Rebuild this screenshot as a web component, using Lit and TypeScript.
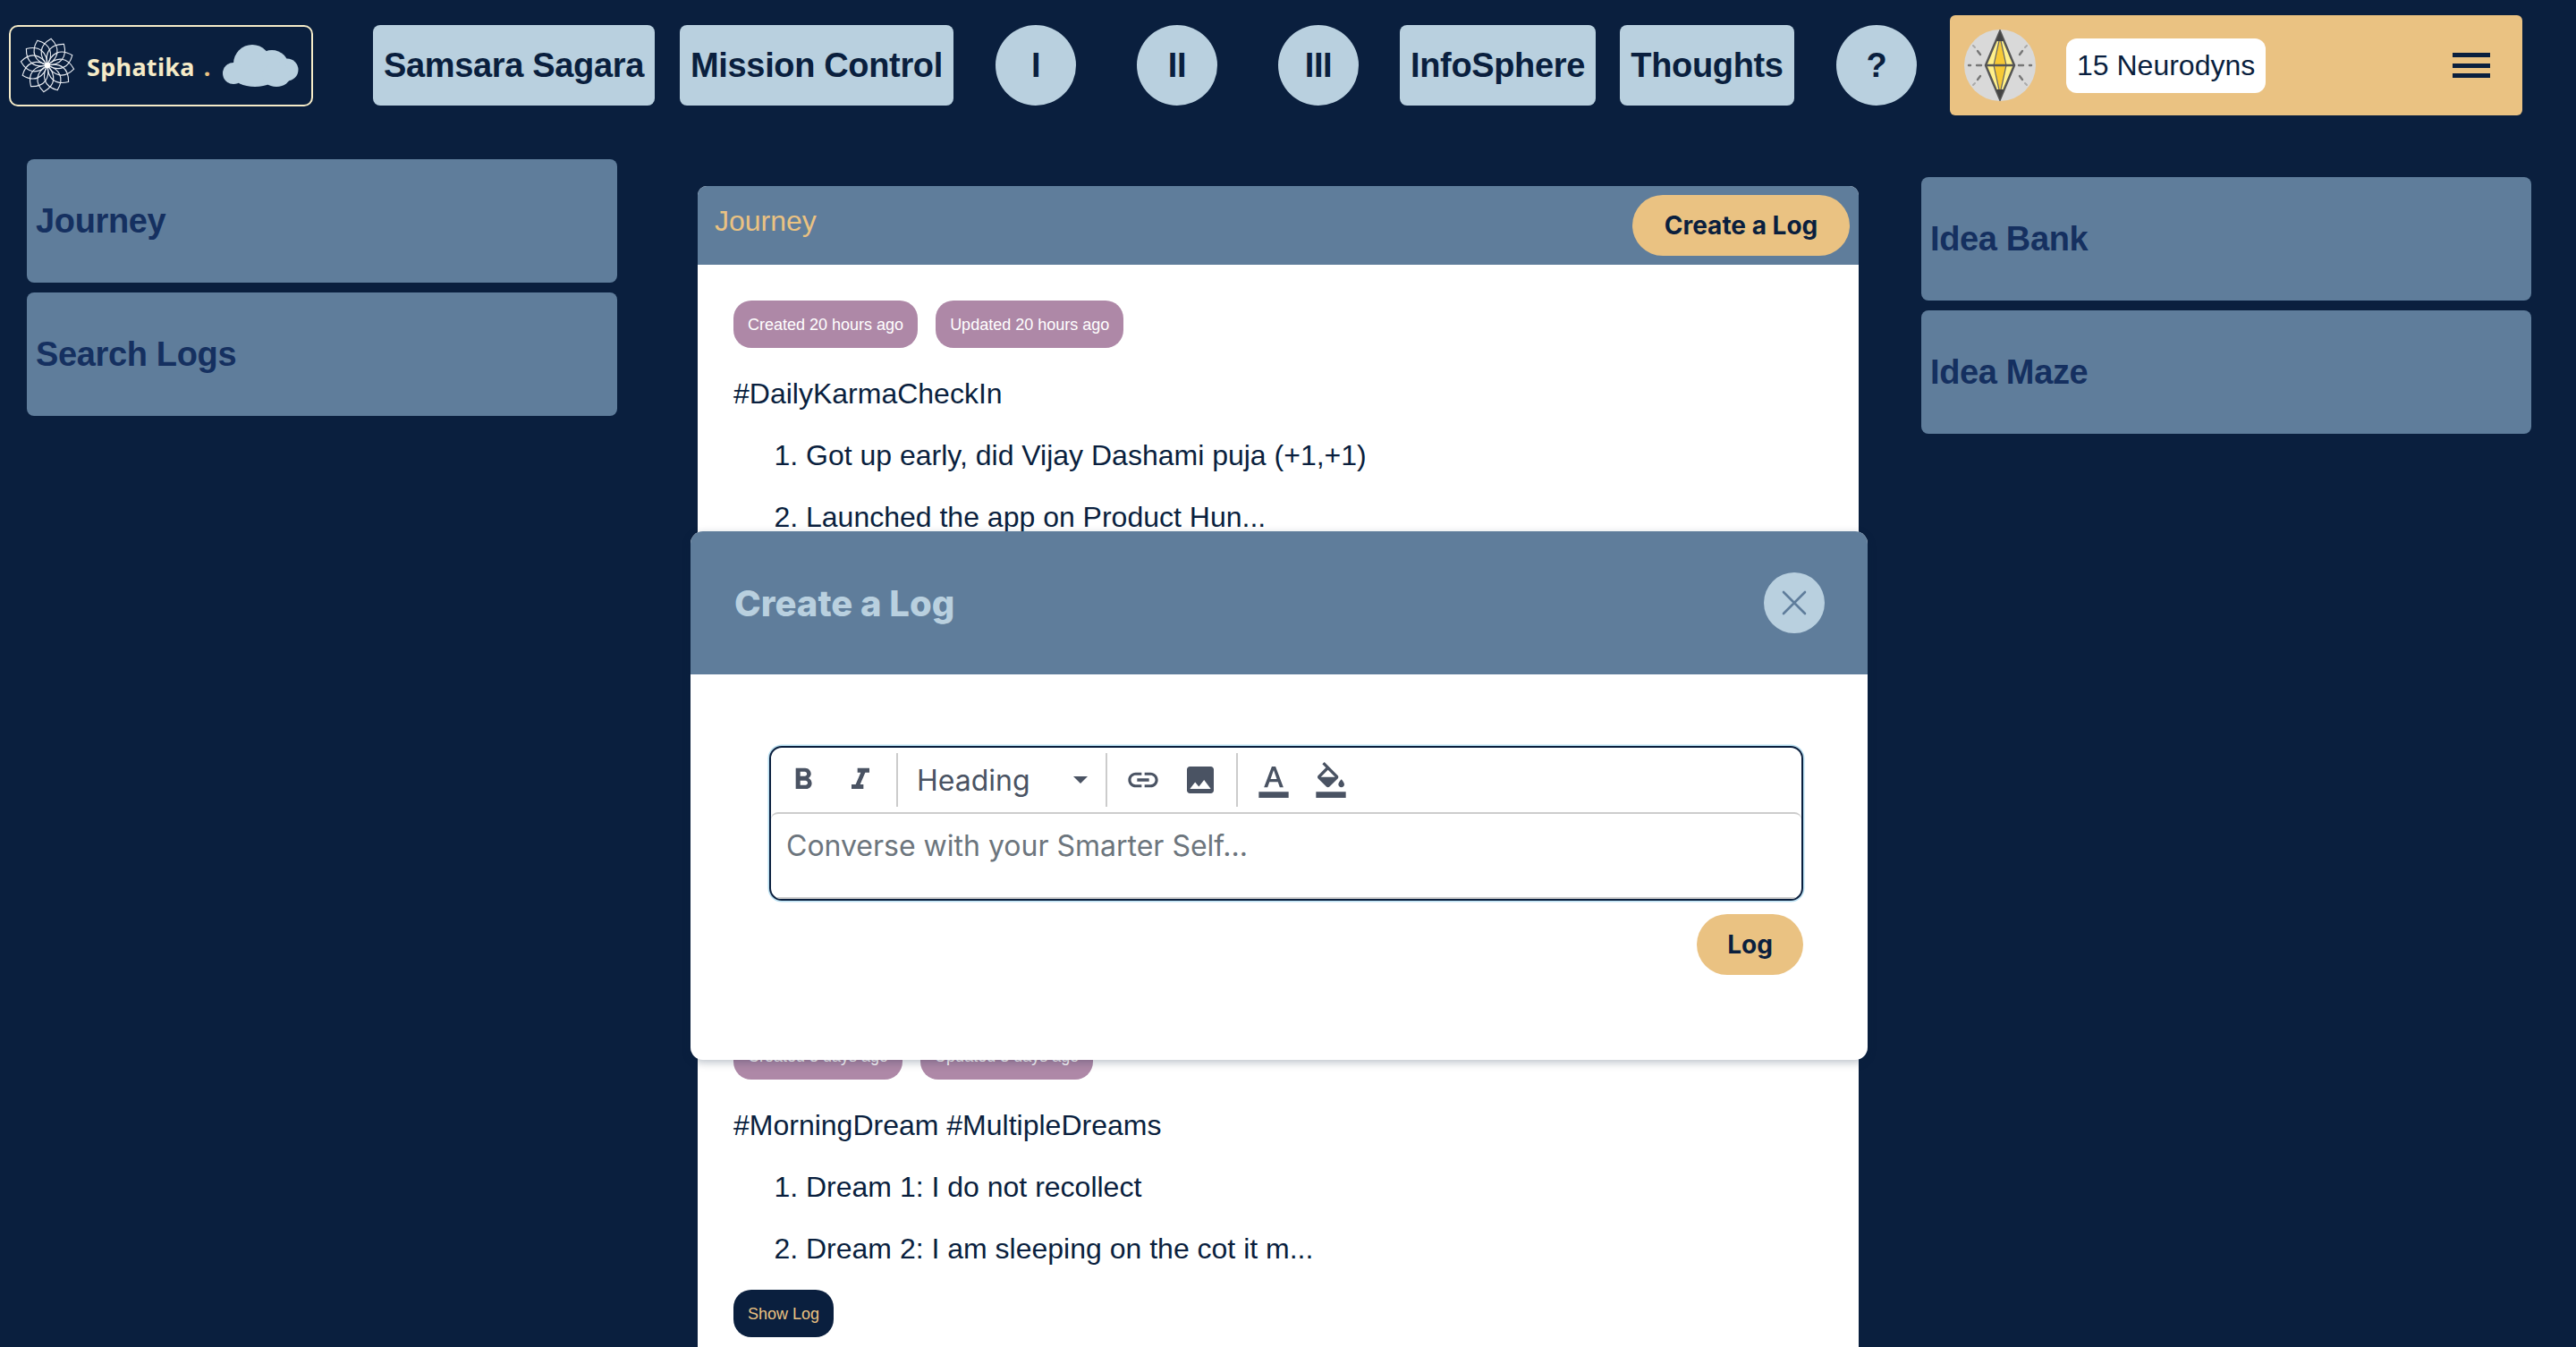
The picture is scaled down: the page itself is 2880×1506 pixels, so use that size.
import { LitElement, html, css, svg } from "lit";
import { customElement } from "lit/decorators.js";

const petal = "M0 0C-11 -9 -12 -20 0 -29C12 -20 11 -9 0 0Z";
const rotations = Array.from({ length: 12 }, (_, i) => i * 30);

const flower = html`<svg class="flower" viewBox="-30 -30 60 60" aria-hidden="true">
  ${rotations.map((r) => svg`<path d=${petal} transform="rotate(${r + 8})" fill="none" stroke="#e8ecf2" stroke-width="1.1"/>`)}
  <circle r="3" fill="#fff"/>
</svg>`;

const cloud = html`<svg class="cloud" viewBox="0 0 85 48" aria-hidden="true">
  <g fill="#b9d0df">
    <circle cx="33" cy="22" r="21"/><circle cx="55" cy="26" r="19"/><circle cx="72" cy="29" r="12.5"/>
    <circle cx="12" cy="33" r="12"/><ellipse cx="36" cy="36" rx="24" ry="12"/><ellipse cx="60" cy="35" rx="16" ry="13"/>
  </g>
</svg>`;

const coin = html`<svg class="coin" viewBox="0 0 80 80" aria-hidden="true">
  <circle cx="40" cy="40" r="40" fill="#d9d9d9"/>
  <path d="M40 2 56 40 40 78 24 40Z" fill="#fff08a" stroke="#555" stroke-width="2.5"/>
  <path d="M40 8 47 40 40 72 33 40Z" fill="#f7c935" stroke="#666" stroke-width="1.2"/>
  <path d="M25 40H55" stroke="#555" stroke-width="2.5"/>
  <path d="M40 2 44 13H36ZM40 78 44 67H36Z" fill="#444"/>
  <g stroke="#777" stroke-width="2.4" stroke-linecap="round">
    <path d="M14 40H19M61 40H66M5 40H7M73 40H75M15 24 18 28M65 24 62 28M15 56 18 52M65 56 62 52"/>
  </g>
  <g stroke="#aaa" stroke-width="2" stroke-linecap="round"><path d="M10 18 12 20M70 18 68 20M10 62 12 60M70 62 68 60"/></g>
</svg>`;

const icon = (d: string, size = 40) =>
  html`<svg width=${size} height=${size} viewBox="0 0 24 24" fill="#4a5363" aria-hidden="true"><path d=${d}/></svg>`;

const ICONS = {
  bold: "M15.6 10.79c.97-.67 1.65-1.77 1.65-2.79 0-2.26-1.75-4-4-4H7v14h7.04c2.09 0 3.71-1.7 3.71-3.79 0-1.52-.86-2.82-2.15-3.42zM10 6.5h3c.83 0 1.5.67 1.5 1.5s-.67 1.5-1.5 1.5h-3v-3zm3.5 9H10v-3h3.5c.83 0 1.5.67 1.5 1.5s-.67 1.5-1.5 1.5z",
  italic: "M10 4v3h2.21l-3.42 8H6v3h8v-3h-2.21l3.42-8H18V4z",
  link: "M3.9 12c0-1.71 1.39-3.1 3.1-3.1h4V7H7c-2.76 0-5 2.24-5 5s2.24 5 5 5h4v-1.9H7c-1.71 0-3.1-1.39-3.1-3.1zM8 13h8v-2H8v2zm9-6h-4v1.9h4c1.71 0 3.1 1.39 3.1 3.1s-1.39 3.1-3.1 3.1h-4V17h4c2.76 0 5-2.24 5-5s-2.24-5-5-5z",
  image: "M21 19V5c0-1.1-.9-2-2-2H5c-1.1 0-2 .9-2 2v14c0 1.1.9 2 2 2h14c1.1 0 2-.9 2-2zM8.5 13.5l2.5 3.01L14.5 12l4.5 6H5l3.5-4.5z",
  text: "M2 20h20v4H2v-4zm3.49-3h2.42l1.27-3.58h5.65L16.09 17h2.42L13.25 3h-2.5L5.49 17zm4.42-5.61 2.03-5.79h.12l2.03 5.79H9.91z",
  fill: "M16.56 8.94 7.62 0 6.21 1.41l2.38 2.38-5.15 5.15c-.59.59-.59 1.54 0 2.12l5.5 5.5c.29.29.68.44 1.06.44s.77-.15 1.06-.44l5.5-5.5c.59-.58.59-1.53 0-2.12zM5.21 10 10 5.21 14.79 10H5.21zM19 11.5s-2 2.17-2 3.5c0 1.1.9 2 2 2s2-.9 2-2c0-1.33-2-3.5-2-3.5zM2 20h20v4H2v-4z",
};

const LOGS = [
  {
    chips: ["Created 20 hours ago", "Updated 20 hours ago"],
    title: "#DailyKarmaCheckIn",
    items: ["Got up early, did Vijay Dashami puja (+1,+1)", "Launched the app on Product Hun..."],
  },
  {
    chips: ["Created 3 days ago", "Updated 3 days ago"],
    title: "#MorningDream #MultipleDreams",
    items: ["Dream 1: I do not recollect", "Dream 2: I am sleeping on the cot it m..."],
  },
];

@customElement("app-root")
export class AppRoot extends LitElement {
  static styles = css`
    :host {
      display: block;
      position: relative;
      height: 100vh;
      overflow: hidden;
      background: #0a1f3e;
      color: #0a1f3e;
      font-family: "Liberation Sans", Arial, sans-serif;
    }
    button {
      font: inherit;
      color: inherit;
      border: 0;
      padding: 0;
      background: none;
    }
    .nav {
      display: flex;
      align-items: center;
      height: 112px;
      padding: 17px 0 0 10px;
    }
    .logo {
      box-sizing: border-box;
      display: flex;
      align-items: center;
      width: 340px;
      height: 91px;
      margin-right: 67px;
      padding-left: 10px;
      border: 2px solid #f5ebc8;
      border-radius: 10px;
      flex: none;
    }
    .flower { width: 62px; height: 62px; margin-right: 13px; flex: none; }
    .brand {
      padding-top: 2px;
      font-family: "Noto Sans", sans-serif;
      font-weight: 700;
      font-size: 27px;
      color: #f5ebc8;
      letter-spacing: 0.3px;
    }
    .dot {
      padding-top: 2px;
      color: #eac282;
      margin-left: 10px;
      font-family: "Noto Sans", sans-serif;
      font-weight: 700;
      font-size: 27px;
    }
    .cloud { width: 85px; height: 48px; margin-left: 14px; flex: none; }
    .btn {
      height: 90px;
      background: #b9d0df;
      border-radius: 8px;
      font-weight: 700;
      font-size: 38px;
      letter-spacing: -0.35px;
      color: #0a1f3e;
      white-space: nowrap;
      text-align: center;
      flex: none;
    }
    .w-samsara { width: 315px; }
    .w-mission { width: 306px; margin-left: 28px; }
    .w-info { width: 219px; margin-left: 46px; }
    .w-thoughts { width: 195px; margin-left: 27px; }
    .circle {
      width: 90px;
      border-radius: 50%;
      margin-left: 47px;
    }
    .circle.near { margin-left: 68px; }
    .neuro {
      box-sizing: border-box;
      display: flex;
      align-items: center;
      width: 640px;
      height: 112px;
      margin-left: 37px;
      padding: 0 36px 0 16px;
      background: #eac282;
      border-radius: 6px;
      flex: none;
    }
    .coin { width: 80px; height: 80px; flex: none; }
    .pill {
      margin-left: 34px;
      padding: 0 12px;
      height: 61px;
      line-height: 61px;
      background: #fff;
      border-radius: 12px;
      font-size: 32px;
      white-space: nowrap;
    }
    .burger {
      margin-left: auto;
      width: 42px;
      display: flex;
      flex-direction: column;
      gap: 6.5px;
    }
    .burger i { display: block; height: 5px; background: #0a1f3e; }
    .columns {
      display: flex;
      align-items: flex-start;
      padding-left: 30px;
    }
    .side {
      display: flex;
      flex-direction: column;
      gap: 11px;
      width: 660px;
      padding-top: 49px;
      flex: none;
    }
    .side.right { width: 682px; padding-top: 69px; margin-left: 70px; }
    .card {
      box-sizing: border-box;
      display: flex;
      align-items: center;
      height: 138px;
      padding-left: 10px;
      background: #5f7d9b;
      border-radius: 8px;
      font-weight: 700;
      font-size: 38px;
      letter-spacing: -0.35px;
      color: #153060;
    }
    .panel {
      margin: 79px 0 0 90px;
      background: #fff;
      border-radius: 10px 10px 0 0;
      width: 1298px;
      min-height: 1400px;
      flex: none;
    }
    .panel-head {
      display: flex;
      justify-content: space-between;
      height: 88px;
      padding: 10px 10px 0 19px;
      box-sizing: border-box;
      background: #5f7d9b;
      border-radius: 10px 10px 0 0;
    }
    .panel-title { font-size: 32px; color: #eac282; line-height: 58px; }
    .create {
      width: 243px;
      height: 68px;
      border-radius: 34px;
      background: #eac282;
      font-family: Inter, sans-serif;
      font-weight: 700;
      font-size: 28px;
      color: #0a1f3e;
    }
    .logs { padding: 40px 40px 0; }
    .log + .log { margin-top: 477px; }
    .chips { display: flex; gap: 20px; }
    .chip {
      height: 53px;
      line-height: 54px;
      padding: 0 16px;
      border-radius: 20px;
      background: #ae88a7;
      color: #fff;
      font-size: 18px;
      white-space: nowrap;
    }
    .log-title { margin: 33px 0 32px; font-size: 32px; line-height: 37px; }
    ol { margin: 0; padding-left: 81px; font-size: 32px; line-height: 37px; }
    li { margin-bottom: 32px; }
    .show {
      display: inline-block;
      margin-top: -5px;
      background: #0a1f3e;
      color: #eac282;
    }
    .modal {
      position: absolute;
      left: 772px;
      top: 594px;
      width: 1316px;
      height: 591px;
      box-sizing: border-box;
      background: #fff;
      border-radius: 14px;
      box-shadow: 0 3px 10px rgba(10, 31, 62, 0.28);
      overflow: hidden;
    }
    .modal-head {
      display: flex;
      align-items: center;
      justify-content: space-between;
      height: 160px;
      padding: 0 48px 0 49px;
      background: #5f7d9b;
    }
    .modal-title {
      font-family: Inter, sans-serif;
      font-weight: 800;
      font-size: 40px;
      color: #b9d0df;
    }
    .close {
      display: flex;
      align-items: center;
      justify-content: center;
      width: 68px;
      height: 68px;
      border-radius: 50%;
      background: #b9d0df;
    }
    .modal-body {
      display: flex;
      flex-direction: column;
      padding: 80px 72px 0 88px;
    }
    .editor {
      box-sizing: border-box;
      height: 173px;
      border: 2px solid #0a1f3e;
      border-radius: 14px;
      box-shadow: 0 0 0 1.5px #b8e0f2;
      overflow: hidden;
    }
    .toolbar {
      display: flex;
      align-items: center;
      height: 72px;
      padding-left: 4px;
    }
    .tool {
      display: flex;
      align-items: center;
      justify-content: center;
      width: 64px;
      height: 60px;
      flex: none;
    }
    .sep { width: 2px; height: 60px; background: #ccc; margin: 0 8px; flex: none; }
    .sep.first { margin-right: 0; }
    .sep.flush { margin: 0 8px 0 0; }
    .heading {
      box-sizing: border-box;
      display: flex;
      align-items: center;
      justify-content: space-between;
      width: 232px;
      padding: 0 20px 0 21px;
      font-family: Inter, sans-serif;
      font-size: 32px;
      color: #4a5363;
      flex: none;
    }
    .caret {
      width: 0;
      height: 0;
      border: 8px solid transparent;
      border-top: 8px solid #4a5363;
      border-bottom: 0;
    }
    .content {
      box-sizing: border-box;
      height: 97px;
      padding: 16px 17px 0;
      border-top: 2px solid #ccc;
      border-radius: 8px 8px 0 0;
      border-bottom: 2px solid #ccc;
      font-family: Inter, sans-serif;
      font-size: 32px;
      line-height: 40px;
      color: #6c757d;
    }
    .log-btn {
      align-self: flex-end;
      width: 119px;
      height: 68px;
      margin-top: 15px;
      border-radius: 34px;
      background: #eac282;
      font-family: Inter, sans-serif;
      font-weight: 700;
      font-size: 28px;
      color: #0a1f3e;
    }
  `;

  render() {
    return html`
      <header class="nav">
        <div class="logo">
          ${flower}<span class="brand">Sphatika</span><span class="dot">.</span>${cloud}
        </div>
        <button class="btn w-samsara">Samsara Sagara</button>
        <button class="btn w-mission">Mission Control</button>
        <button class="btn circle">I</button>
        <button class="btn circle near">II</button>
        <button class="btn circle near">III</button>
        <button class="btn w-info">InfoSphere</button>
        <button class="btn w-thoughts">Thoughts</button>
        <button class="btn circle">?</button>
        <div class="neuro">
          ${coin}
          <span class="pill">15 Neurodyns</span>
          <div class="burger"><i></i><i></i><i></i></div>
        </div>
      </header>
      <div class="columns">
        <aside class="side">
          <div class="card">Journey</div>
          <div class="card">Search Logs</div>
        </aside>
        <main class="panel">
          <div class="panel-head">
            <span class="panel-title">Journey</span>
            <button class="create">Create a Log</button>
          </div>
          <div class="logs">
            ${LOGS.map(
              (l) => html`<article class="log">
                <div class="chips">${l.chips.map((c) => html`<span class="chip">${c}</span>`)}</div>
                <p class="log-title">${l.title}</p>
                <ol>${l.items.map((i) => html`<li>${i}</li>`)}</ol>
                <button class="chip show">Show Log</button>
              </article>`
            )}
          </div>
        </main>
        <aside class="side right">
          <div class="card">Idea Bank</div>
          <div class="card">Idea Maze</div>
        </aside>
      </div>
      <section class="modal">
        <div class="modal-head">
          <span class="modal-title">Create a Log</span>
          <button class="close" aria-label="Close">
            <svg width="28" height="28" viewBox="0 0 28 28" aria-hidden="true">
              <path d="M2 2 26 26M26 2 2 26" stroke="#5f7d9b" stroke-width="2.6" stroke-linecap="round" fill="none"/>
            </svg>
          </button>
        </div>
        <div class="modal-body">
          <div class="editor">
            <div class="toolbar">
              <span class="tool">${icon(ICONS.bold)}</span>
              <span class="tool">${icon(ICONS.italic)}</span>
              <span class="sep first"></span>
              <span class="heading">Heading<i class="caret"></i></span>
              <span class="sep flush"></span>
              <span class="tool">${icon(ICONS.link)}</span>
              <span class="tool">${icon(ICONS.image)}</span>
              <span class="sep"></span>
              <span class="tool">${icon(ICONS.text)}</span>
              <span class="tool">${icon(ICONS.fill)}</span>
            </div>
            <div class="content">Converse with your Smarter Self...</div>
          </div>
          <button class="log-btn">Log</button>
        </div>
      </section>
    `;
  }
}
